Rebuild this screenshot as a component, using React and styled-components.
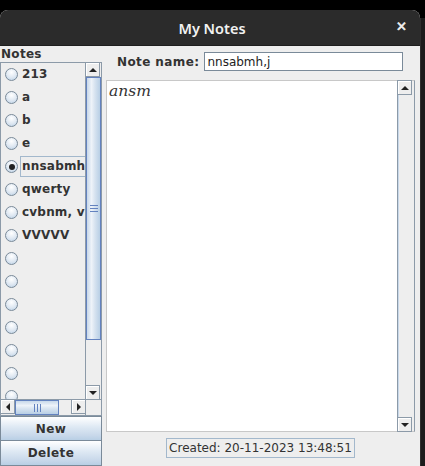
import React from "react";
import styled, { createGlobalStyle } from "styled-components";

const GlobalStyle = createGlobalStyle`
  html, body {
    margin: 0;
    padding: 0;
    background: #000;
  }
  * {
    box-sizing: border-box;
  }
`;

const notes = ["213", "a", "b", "e", "nnsabmh,j", "qwerty", "cvbnm, v", "VVVVV", "", "", "", "", "", "", ""];
const selected = 4;

const App = () => {
  return (
    <Screen>
      <GlobalStyle />
      <Desktop>
        <Window>
          <TitleBar>
            <Title>My Notes</Title>
            <Close>✕</Close>
          </TitleBar>
          <Body>
            <LeftPanel>
              <SectionLabel>Notes</SectionLabel>
              <ScrollPane>
                <Viewport>
                  {notes.map((name, key) => (
                    <Item key={key}>
                      <Radio checked={key === selected} />
                      <ItemText focused={key === selected}>{name}</ItemText>
                    </Item>
                  ))}
                </Viewport>
                <VBar>
                  <ArrowButton>
                    <Arrow dir="up" />
                  </ArrowButton>
                  <VThumb style={{ height: 263 }}>
                    <Grip vertical />
                  </VThumb>
                  <VTrack />
                  <ArrowButton>
                    <Arrow dir="down" />
                  </ArrowButton>
                </VBar>
                <HBar>
                  <ArrowButton>
                    <Arrow dir="left" />
                  </ArrowButton>
                  <HThumb style={{ width: 44 }}>
                    <Grip />
                  </HThumb>
                  <HTrack />
                  <ArrowButton>
                    <Arrow dir="right" />
                  </ArrowButton>
                </HBar>
                <Corner />
              </ScrollPane>
              <Button>New</Button>
              <Button>Delete</Button>
            </LeftPanel>
            <RightPanel>
              <NameRow>
                <FieldLabel>Note name:</FieldLabel>
                <TextField defaultValue="nnsabmh,j" />
              </NameRow>
              <EditorPane>
                <Editor>ansm</Editor>
                <VBar>
                  <ArrowButton>
                    <Arrow dir="up" />
                  </ArrowButton>
                  <EmptyTrack />
                  <ArrowButton>
                    <Arrow dir="down" />
                  </ArrowButton>
                </VBar>
              </EditorPane>
              <Footer>
                <Created>Created: 20-11-2023 13:48:51</Created>
              </Footer>
            </RightPanel>
          </Body>
        </Window>
        <Edge />
      </Desktop>
    </Screen>
  );
};

export default App;

const Screen = styled.div`
  width: 425px;
  height: 466px;
  padding-top: 10px;
  background: #000;
  overflow: hidden;
  font-family: "DejaVu Sans", "Liberation Sans", sans-serif;
`;

const Desktop = styled.div`
  display: flex;
  height: 456px;
`;

const Window = styled.div`
  width: 420px;
  display: flex;
  flex-direction: column;
  background: #eeeeee;
  border-radius: 8px 8px 0 0;
  overflow: hidden;
`;

const Edge = styled.div`
  flex: 1;
  background: #1c1c1c;
  border-left: 1px solid #2e2e2e;
  margin-top: 8px;
`;

const TitleBar = styled.div`
  height: 36px;
  flex-shrink: 0;
  background: #2b2b2b;
  display: flex;
  align-items: center;
  justify-content: center;
  position: relative;
  border-bottom: 1px solid #1e1e1e;
`;

const Title = styled.div`
  color: #f2f2f2;
  font-family: "Noto Sans", "Open Sans", sans-serif;
  font-weight: 600;
  font-size: 14.5px;
  margin-left: 4px;
`;

const Close = styled.div`
  position: absolute;
  right: 13px;
  top: 9px;
  color: #f0f0f0;
  font-size: 13px;
  font-weight: 700;
  -webkit-text-stroke: 0.6px #f0f0f0;
`;

const Body = styled.div`
  flex: 1;
  display: flex;
  min-height: 0;
`;

const LeftPanel = styled.div`
  width: 102px;
  display: flex;
  flex-direction: column;
`;

const SectionLabel = styled.div`
  height: 16px;
  padding: 1px 0 0 1px;
  font-size: 12px;
  font-weight: 700;
  color: #333333;
  letter-spacing: 0.3px;
`;

const ScrollPane = styled.div`
  flex: 1;
  display: grid;
  grid-template-columns: 1fr 16px;
  grid-template-rows: 1fr 16px;
  border: 1px solid #8c9aa8;
  min-height: 0;
`;

const Viewport = styled.div`
  overflow: hidden;
  background: #eeeeee;
`;

const Item = styled.div`
  height: 23px;
  display: flex;
  align-items: center;
  padding-left: 4px;
  gap: 2px;
  white-space: nowrap;
`;

const Radio = styled.span`
  width: 13px;
  height: 13px;
  flex-shrink: 0;
  border-radius: 50%;
  border: 1px solid #7a8a99;
  background: radial-gradient(circle at 50% 30%, #ffffff 0%, #dfe8f2 55%, #b8cfe5 100%);
  position: relative;
  &::after {
    content: "";
    display: ${(p) => (p.checked ? "block" : "none")};
    position: absolute;
    left: 2.5px;
    top: 2.5px;
    width: 6px;
    height: 6px;
    border-radius: 50%;
    background: #222;
  }
`;

const ItemText = styled.span`
  font-size: 12px;
  font-weight: 700;
  color: #333333;
  padding: 2px 1px 3px 1px;
  border: 1px solid ${(p) => (p.focused ? "#a3b8cc" : "transparent")};
  letter-spacing: 0.2px;
`;

const VBar = styled.div`
  display: flex;
  flex-direction: column;
  background: #eeeeee;
  border-left: 1px solid #8c9aa8;
`;

const HBar = styled.div`
  display: flex;
  background: #eeeeee;
  border-top: 1px solid #8c9aa8;
`;

const Corner = styled.div`
  background: #eeeeee;
  border-top: 1px solid #8c9aa8;
  border-left: 1px solid #8c9aa8;
`;

const ArrowButton = styled.div`
  width: 15px;
  height: 15px;
  flex-shrink: 0;
  display: flex;
  align-items: center;
  justify-content: center;
  background: #eeeeee;
  border: 1px solid #8c9aa8;
  box-shadow: inset 1px 1px 0 #ffffff;
  margin: -1px;
`;

const Arrow = styled.span`
  width: 0;
  height: 0;
  border: 4px solid transparent;
  ${(p) =>
    p.dir === "up"
      ? "border-bottom: 4px solid #222; border-top-width: 0;"
      : p.dir === "down"
      ? "border-top: 4px solid #222; border-bottom-width: 0;"
      : p.dir === "left"
      ? "border-right: 4px solid #222; border-left-width: 0;"
      : "border-left: 4px solid #222; border-right-width: 0;"}
`;

const VThumb = styled.div`
  flex-shrink: 0;
  margin-top: 1px;
  border: 1px solid #6382bf;
  background: linear-gradient(to right, #c8d8ea, #eef3f9 35%, #d7e3f0 60%, #b8cfe5);
  display: flex;
  align-items: center;
  justify-content: center;
`;

const HThumb = styled.div`
  flex-shrink: 0;
  margin-left: 1px;
  border: 1px solid #6382bf;
  background: linear-gradient(to bottom, #c8d8ea, #eef3f9 35%, #d7e3f0 60%, #b8cfe5);
  display: flex;
  align-items: center;
  justify-content: center;
`;

const Grip = styled.span`
  width: ${(p) => (p.vertical ? "8px" : "7px")};
  height: ${(p) => (p.vertical ? "7px" : "8px")};
  background: ${(p) =>
    p.vertical
      ? "repeating-linear-gradient(to bottom, #6382bf 0 1px, transparent 1px 3px)"
      : "repeating-linear-gradient(to right, #6382bf 0 1px, transparent 1px 3px)"};
`;

const VTrack = styled.div`
  flex: 1;
  background: #eeeeee;
`;

const HTrack = styled.div`
  flex: 1;
  background: #eeeeee;
`;

const EmptyTrack = styled.div`
  flex: 1;
  margin-top: 1px;
  background: #eeeeee;
  border-left: 1px solid #c8d8ea;
`;

const Button = styled.div`
  height: 25px;
  flex-shrink: 0;
  display: flex;
  align-items: center;
  justify-content: center;
  border: 1px solid #7a8a99;
  background: linear-gradient(to bottom, #ffffff, #dde8f3 45%, #c8d8ea 80%, #b8cfe5);
  font-size: 12px;
  font-weight: 700;
  color: #333333;
  letter-spacing: 0.4px;
  & + & {
    border-top: none;
  }
`;

const RightPanel = styled.div`
  flex: 1;
  display: flex;
  flex-direction: column;
  padding: 6px 5px 3px 4px;
  min-width: 0;
`;

const NameRow = styled.div`
  display: flex;
  align-items: center;
  height: 19px;
  padding-left: 11px;
  gap: 5px;
`;

const FieldLabel = styled.span`
  font-size: 12px;
  font-weight: 700;
  color: #333333;
  letter-spacing: 0.4px;
`;

const TextField = styled.input`
  width: 199px;
  height: 19px;
  margin: 0;
  padding: 0 2px;
  border: 1px solid #7a8a99;
  background: #ffffff;
  font-family: "DejaVu Sans", sans-serif;
  font-size: 12px;
  color: #222;
  outline: none;
`;

const EditorPane = styled.div`
  flex: 1;
  margin-top: 9px;
  display: grid;
  grid-template-columns: 1fr 17px;
  border: 1px solid #c8c8c8;
  border-right: 1px solid #8c9aa8;
  min-height: 0;
`;

const Editor = styled.div`
  background: #ffffff;
  padding: 1px 2px;
  font-family: "DejaVu Serif", "Liberation Serif", serif;
  font-style: italic;
  font-size: 15.5px;
  color: #333333;
`;

const Footer = styled.div`
  height: 31px;
  flex-shrink: 0;
  display: flex;
  align-items: center;
  justify-content: center;
`;

const Created = styled.span`
  border: 1px solid #a3b8cc;
  padding: 1px 2px 1px 2px;
  font-size: 12px;
  color: #333333;
  line-height: 16px;
`;
